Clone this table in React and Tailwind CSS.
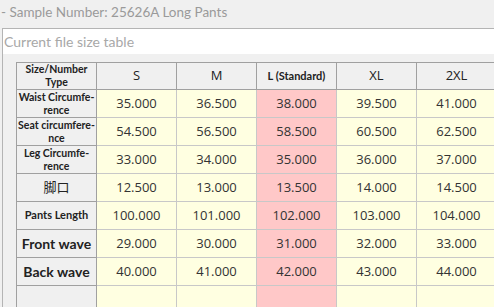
const rows = [
  { label: 'Waist Circumfe-\nrence', cls: 'text-[10.5px] font-bold leading-[13px]', vals: ['35.000', '36.500', '38.000', '39.500', '41.000'] },
  { label: 'Seat circumfere-\nnce', cls: 'text-[10.5px] font-bold leading-[13px]', vals: ['54.500', '56.500', '58.500', '60.500', '62.500'] },
  { label: 'Leg Circumfe-\nrence', cls: 'text-[10.5px] font-bold leading-[13px]', vals: ['33.000', '34.000', '35.000', '36.000', '37.000'] },
  { label: '脚口', cls: 'text-[13px]', vals: ['12.500', '13.000', '13.500', '14.000', '14.500'] },
  { label: 'Pants Length', cls: 'text-[11px] font-bold', vals: ['100.000', '101.000', '102.000', '103.000', '104.000'] },
  { label: 'Front wave', cls: 'text-[14px] font-bold', vals: ['29.000', '30.000', '31.000', '32.000', '33.000'] },
  { label: 'Back wave', cls: 'text-[14px] font-bold', vals: ['40.000', '41.000', '42.000', '43.000', '44.000'] },
  { label: '', cls: '', vals: ['', '', '', '', ''] },
];

export default function App() {
  return (
    <div className="w-[494px] h-[307px] overflow-hidden bg-[#f0f0f0] flex flex-col font-['Open_Sans','Noto_Sans_CJK_SC',sans-serif]">
      {/* window behind the dialog */}
      <div className="h-[28px] shrink-0 pl-[1px] pt-[3px] text-[13.5px] leading-[18px] text-[#9a9a9a] font-['Lato',sans-serif]">
        - Sample Number: 25626A Long Pants
      </div>

      {/* dialog */}
      <div className="flex-1 min-h-0 ml-[2px] border-l border-t border-[#b4b4b4] flex flex-col">
        <div className="h-[25px] shrink-0 bg-white pl-[1px] flex items-center text-[14px] text-[#a8a8a8] font-['Lato',sans-serif]">
          Current file size table
        </div>

        <div className="flex-1 bg-[#f0f0f0] pl-[13px] pt-[8px]">
          <div className="grid grid-cols-[80px_80px_80px_80px_80px_80px] border-l border-t border-[#a0a0a0] text-[#222]">
            {/* header row */}
            <div className="h-[27px] bg-[#f0f0f0] border-r border-b border-[#a0a0a0] flex items-center justify-center text-center text-[10.5px] font-bold leading-[13px] font-['Lato',sans-serif]">
              Size/Number<br />Type
            </div>
            <div className="h-[27px] bg-[#f0f0f0] border-r border-b border-[#a0a0a0] flex items-center justify-center text-[13px]">S</div>
            <div className="h-[27px] bg-[#f0f0f0] border-r border-b border-[#a0a0a0] flex items-center justify-center text-[13px]">M</div>
            <div className="h-[27px] bg-[#f0f0f0] border-r border-b border-[#a0a0a0] flex items-center justify-center text-[11px] font-bold font-['Lato',sans-serif]">
              L (Standard)
            </div>
            <div className="h-[27px] bg-[#f0f0f0] border-r border-b border-[#a0a0a0] flex items-center justify-center text-[13px]">XL</div>
            <div className="h-[27px] bg-[#f0f0f0] border-r border-b border-[#a0a0a0] flex items-center justify-center text-[13px]">2XL</div>

            {rows.map((r, ri) => (
              <Row key={ri} r={r} />
            ))}
          </div>
        </div>
      </div>
    </div>
  );
}

function Row({ r }) {
  return (
    <>
      <div
        className={
          "h-[28px] bg-[#f0f0f0] border-r border-b border-[#a0a0a0] flex items-center justify-center text-center whitespace-pre font-['Lato','Noto_Sans_CJK_SC',sans-serif] " +
          r.cls
        }
      >
        {r.label}
      </div>
      {r.vals.map((v, i) => (
        <div
          key={i}
          className={
            'h-[28px] border-r border-b border-[#c8c8c8] flex items-center justify-center text-[13px] text-[#333] ' +
            (i === 2 ? 'bg-[#ffc8c8]' : 'bg-[#ffffe1]')
          }
        >
          {v}
        </div>
      ))}
    </>
  );
}
